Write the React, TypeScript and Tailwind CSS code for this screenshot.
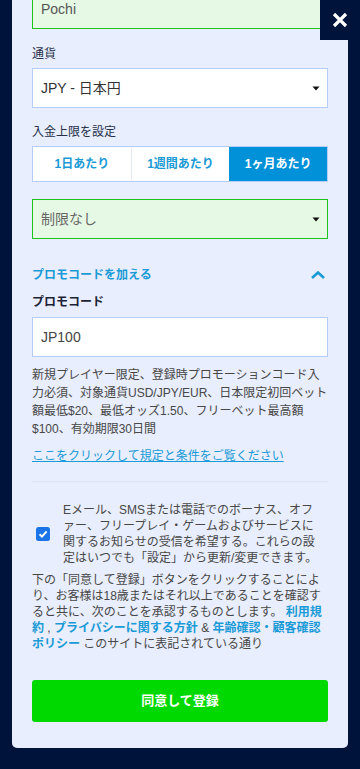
import React from "react";

function Caret() {
  return (
    <svg width="8" height="5" viewBox="0 0 8 5" className="shrink-0">
      <path d="M0.5 0.5 L7.5 0.5 L4 4.5 Z" fill="#111" />
    </svg>
  );
}

export default function App() {
  const tabs = ["1日あたり", "1週間あたり", "1ヶ月あたり"];
  return (
    <div className="relative min-h-[769px] bg-[#00133a] font-['Liberation_Sans','Noto_Sans_CJK_JP',sans-serif] overflow-hidden">
      <div className="mx-[12px] flex flex-col rounded-b-[5px] bg-[#e8eefd] px-[20px] pb-[26px]">
        <div className="-mt-[11px] flex h-10 items-center border border-[#1cc41c] bg-[#e6f9e4] pl-2 text-[14px] text-[#555]">
          Pochi
        </div>

        <div className="mt-[16px] text-[12px] leading-[18px] text-[#26304a]">通貨</div>
        <div className="mt-[5px] flex h-10 items-center justify-between border border-[#b3cdf6] bg-white pl-2 pr-[7px] text-[14px] text-[#333]">
          <span>JPY - 日本円</span>
          <Caret />
        </div>

        <div className="mt-[15px] text-[12px] leading-[18px] text-[#26304a]">入金上限を設定</div>
        <div className="mt-[5px] flex h-9 border border-[#b3cdf6] bg-white">
          {tabs.map((t, i) => (
            <div
              key={t}
              className={
                i === 2
                  ? "flex flex-1 items-center justify-center bg-[#0091d9] text-[12px] font-bold text-white"
                  : i === 0
                  ? "flex flex-1 items-center justify-center border-r border-[#e4ebf7] text-[12px] font-bold text-[#1a9ad6]"
                  : "flex flex-1 items-center justify-center text-[12px] font-bold text-[#1a9ad6]"
              }
            >
              {t}
            </div>
          ))}
        </div>

        <div className="mt-[17px] flex h-10 items-center justify-between border border-[#1cc41c] bg-[#e6f9e4] pl-2 pr-[7px] text-[14px] text-[#666]">
          <span>制限なし</span>
          <Caret />
        </div>

        <div className="mt-[27px] flex h-[18px] items-center justify-between pr-[3px]">
          <span className="text-[12px] font-bold text-[#1a9ad6]">プロモコードを加える</span>
          <svg width="14" height="8" viewBox="0 0 14 8">
            <path d="M1 7 L7 1.5 L13 7" fill="none" stroke="#1a9ad6" strokeWidth="2.6" />
          </svg>
        </div>

        <div className="mt-[9px] text-[12px] font-bold leading-[18px] text-[#1b2236]">プロモコード</div>
        <div className="mt-[6px] flex h-10 items-center border border-[#b3cdf6] bg-white pl-2 text-[14px] text-[#444]">
          JP100
        </div>

        <p className="mt-[9px] text-[12px] leading-[18px] text-[#474747]">
          新規プレイヤー限定、登録時プロモーションコード入力必須、対象通貨USD/JPY/EUR、日本限定初回ベット額最低$20、最低オッズ1.50、フリーベット最高額$100、有効期限30日間
        </p>

        <a className="mt-[9px] block text-[12px] leading-[18px] text-[#1a9ad6] underline">
          ここをクリックして規定と条件をご覧ください
        </a>

        <div className="mt-[16px] h-px bg-[#dae3f6]" />

        <div className="mt-[20px] flex items-center">
          <div className="flex w-[31px] shrink-0 items-center pl-[4px]">
            <div className="flex h-[14px] w-[14px] items-center justify-center rounded-[2.5px] bg-[#1b74e8]">
              <svg width="10" height="10" viewBox="0 0 10 10">
                <path d="M1.6 5.2 L4 7.6 L8.6 2.4" fill="none" stroke="#fff" strokeWidth="2" />
              </svg>
            </div>
          </div>
          <p className="w-[256px] text-[12px] leading-[16px] text-[#474747]">
            Eメール、SMSまたは電話でのボーナス、オファー、フリープレイ・ゲームおよびサービスに関するお知らせの受信を希望する。これらの設定はいつでも「設定」から更新/変更できます。
          </p>
        </div>

        <p className="mt-[6px] text-[12px] leading-[16px] text-[#474747]">
          下の「同意して登録」ボタンをクリックすることにより、お客様は18歳またはそれ以上であることを確認すると共に、次のことを承認するものとします。{" "}
          <a className="font-bold text-[#1a9ad6]">利用規約</a> ,{" "}
          <a className="font-bold text-[#1a9ad6]">プライバシーに関する方針</a> &amp;{" "}
          <a className="font-bold text-[#1a9ad6]">年齢確認・顧客確認ポリシー</a> このサイトに表記されている通り
        </p>

        <button className="mt-[28px] flex h-[42px] items-center justify-center rounded-[3px] bg-[#00d900] text-[13px] font-bold text-white">
          同意して登録
        </button>
      </div>

      <div className="absolute right-0 top-0 flex h-10 w-10 items-center justify-center bg-[#00133a]">
        <svg width="16" height="16" viewBox="0 0 16 16">
          <path d="M2 2 L14 14 M14 2 L2 14" stroke="#fff" strokeWidth="3.2" />
        </svg>
      </div>
    </div>
  );
}
